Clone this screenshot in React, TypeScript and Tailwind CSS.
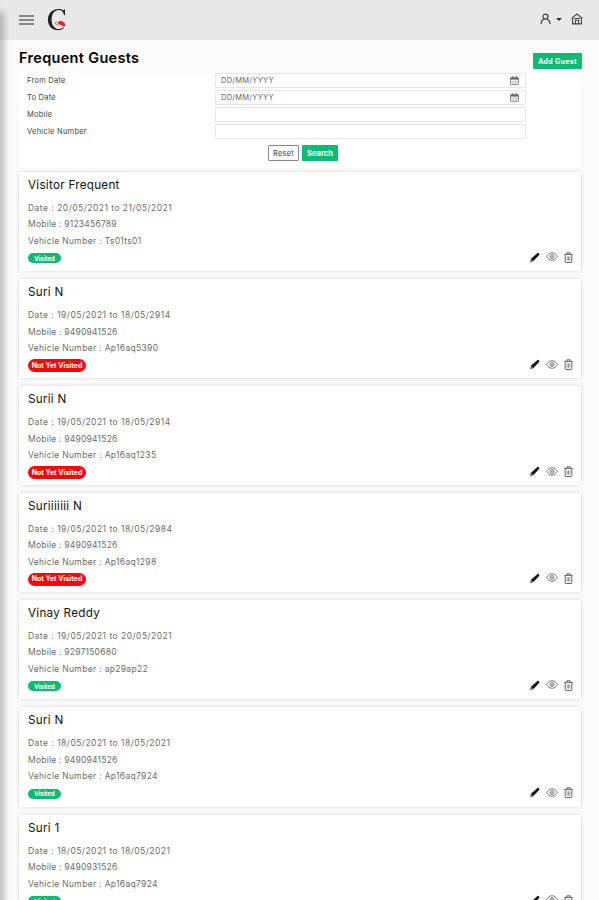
import React from 'react';
import { clsx } from 'clsx';

interface Guest {
  id: number;
  name: string;
  from: string;
  to: string;
  mobile: string;
  vehicle: string;
  visited: boolean;
}

const guests: Guest[] = [
  { id: 1, name: 'Visitor Frequent', from: '20/05/2021', to: '21/05/2021', mobile: '9123456789', vehicle: 'Ts01ts01', visited: true },
  { id: 2, name: 'Suri N', from: '19/05/2021', to: '18/05/2914', mobile: '9490941526', vehicle: 'Ap16aq5390', visited: false },
  { id: 3, name: 'Surii N', from: '19/05/2021', to: '18/05/2914', mobile: '9490941526', vehicle: 'Ap16aq1235', visited: false },
  { id: 4, name: 'Suriiiiiii N', from: '19/05/2021', to: '18/05/2984', mobile: '9490941526', vehicle: 'Ap16aq1298', visited: false },
  { id: 5, name: 'Vinay Reddy', from: '19/05/2021', to: '20/05/2021', mobile: '9297150680', vehicle: 'ap29ap22', visited: true },
  { id: 6, name: 'Suri N', from: '18/05/2021', to: '18/05/2021', mobile: '9490941526', vehicle: 'Ap16aq7924', visited: true },
  { id: 7, name: 'Suri 1', from: '18/05/2021', to: '18/05/2021', mobile: '9490931526', vehicle: 'Ap16aq7924', visited: true },
];

const Logo: React.FC = () => (
  <svg width="20" height="24" viewBox="0 0 20 24" className="-mt-px ml-[13px]">
    <path
      d="M18 1.600v5.600h-.8C16.300 3.800 14.600 2 11.800 2 7.600 2 4.600 5.800 4.600 11.400s3 9.700 7.200 9.700c1.900 0 3.300-.6 4.700-1.800l.6.5c-1.600 1.700-3.500 2.500-6.100 2.500C5 22.300.9 18.100.9 11.800S5.300 1 11.500 1c1.900 0 3.700.5 4.900 1.400l.7-.8z"
      fill="#222"
    />
    <path d="M11 14.300l2.400-1.500 1.900.6 2.400 1.700.5 2.800-2.200.6-2.300-1.700-2.600-.6z" fill="#ee1c28" />
    <path d="M7.800 15.200l1.900-1.400 1.800 1.500-1.500 1.500z" fill="none" stroke="#ee5b62" strokeWidth=".9" />
  </svg>
);

const UserIcon: React.FC = () => (
  <svg width="11" height="12" viewBox="0 0 11 12" fill="none" stroke="#444" strokeWidth="1.200">
    <circle cx="5.500" cy="3.600" r="2.500" />
    <path d="M4.300 6C2.200 6.800 1.100 8.600 1 11M6.700 6c2.100.8 3.200 2.600 3.300 5" />
  </svg>
);

const HomeIcon: React.FC = () => (
  <svg width="12" height="12" viewBox="0 0 12 12" fill="none" stroke="#444" strokeWidth="1.100">
    <path d="M.6 5.400L6 1l5.400 4.400M1.600 4.900v6h8.800v-6" />
    <path d="M4.400 10.900V7.200h3.200v3.700M3 5.500h6" />
  </svg>
);

const CalendarIcon: React.FC = () => (
  <svg width="9" height="9" viewBox="0 0 9 9" fill="none" stroke="#666" strokeWidth=".8">
    <rect x=".6" y="1.400" width="7.800" height="7" rx=".6" />
    <path d="M.6 2.700h7.800" strokeWidth="1.800" />
    <path d="M2.600 0v2M6.400 0v2" />
    <path d="M.6 5.900h7.800M3.200 4v4.400M5.800 4v4.400" stroke="#999" strokeWidth=".5" />
  </svg>
);

const PencilIcon: React.FC = () => (
  <svg width="11" height="11" viewBox="0 0 11 11">
    <path d="M8.200 1.200c.5-.5 1-.5 1.500 0l.4.400c.5.5.5 1 0 1.500L4.200 9.300 1.700 7.100z" fill="#151515" />
    <path d="M1.700 7.100l2.500 2.200-3.200 1.200z" fill="#666" />
  </svg>
);

const EyeIcon: React.FC = () => (
  <svg width="12" height="10" viewBox="0 0 12 10" fill="none" stroke="#666" strokeWidth=".9">
    <path d="M.6 4.500C2 2 3.800.7 6 .7S10 2 11.400 4.500C10 7 8.200 8.300 6 8.300S2 7 .6 4.500z" />
    <circle cx="6" cy="4.500" r="2" />
    <circle cx="6" cy="4.500" r=".5" />
  </svg>
);

const TrashIcon: React.FC = () => (
  <svg width="9" height="11" viewBox="0 0 9 11" fill="none" stroke="#555" strokeWidth=".9">
    <path d="M.3 2.400h8.400M2.800 2.300V.8h3.400v1.500M1.200 2.600v7.200c0 .4.300.7.700.7h5.200c.4 0 .7-.3.7-.7V2.600" />
    <path d="M3.200 4.300v4.400M5.800 4.300v4.400M4.500 4.300v4.400" strokeWidth=".6" />
  </svg>
);

const Field: React.FC<{ label: string; date?: boolean }> = ({ label, date }) => (
  <div className="flex h-[17px] items-start">
    <label className="w-[188px] pt-px text-[7.5px] leading-[14px] tracking-[0.25px] text-[#444]">{label}</label>
    <div className="flex h-[15px] w-[311px] items-center justify-between rounded-[1px] border border-[#e3e6e8] bg-white pr-[6px] pl-[5px]">
      {date && (
        <>
          <span className="pt-px text-[7.5px] leading-none tracking-[0.3px] text-[#666]">DD/MM/YYYY</span>
          <CalendarIcon />
        </>
      )}
    </div>
  </div>
);

const GuestCard: React.FC<{ guest: Guest }> = ({ guest }) => (
  <div
    className={clsx(
      'w-[562px] bg-white pl-[9px] shadow-[0_0_3px_rgba(0,0,0,0.16)]',
      guest.visited ? 'h-[99.500px]' : 'h-[98.800px]'
    )}
  >
    <h2 className="pt-[5px] text-[11.7px] leading-[17px] tracking-[0.26px] text-[#111]">{guest.name}</h2>
    <div className="pt-[6px] text-[8.5px] leading-[16.500px] text-[#6c6c6c]">
      <p className="tracking-[0.48px]">Date : {guest.from} to {guest.to}</p>
      <p className="tracking-[0.22px]">Mobile : {guest.mobile}</p>
      <p className="tracking-[0.32px]">Vehicle Number : {guest.vehicle}</p>
    </div>
    <div className="flex h-[18px] items-center justify-between pr-[8px]">
      {guest.visited ? (
        <span className="flex h-[10px] w-[33px] items-center justify-center rounded-full bg-[#0cbc76] text-[6px] leading-[9px] font-bold text-white">
          Visited
        </span>
      ) : (
        <span className="flex h-[13px] w-[58px] items-center justify-center rounded-full bg-[#fb0508] text-[7px] leading-[10px] font-bold text-white">
          Not Yet Visited
        </span>
      )}
      <div className="mb-[2px] flex items-center gap-[6px]">
        <PencilIcon />
        <EyeIcon />
        <TrashIcon />
      </div>
    </div>
  </div>
);

export default function App() {
  return (
    <div className="relative h-[900px] w-[599px] overflow-hidden bg-[#fafafa] font-['Inter','Liberation_Sans',sans-serif]">
      <div className="absolute top-[6px] bottom-0 left-0 w-[9px] bg-linear-to-r from-black/22 to-transparent mask-[linear-gradient(to_bottom,transparent,black_12px)]" />

      <header className="flex h-[40px] items-center bg-[#e8e8e8] pl-[19px]">
        <div className="flex w-[15px] flex-col gap-[2px]">
          <span className="h-[2px] bg-[#888]" />
          <span className="h-[2px] bg-[#888]" />
          <span className="h-[2px] bg-[#888]" />
        </div>
        <Logo />
        <div className="-mt-[3px] ml-auto flex items-center pr-[16px]">
          <UserIcon />
          <span className="mt-[2px] mr-[9px] ml-[5px] border-x-[3px] border-t-[3px] border-x-transparent border-t-[#333]" />
          <HomeIcon />
        </div>
      </header>

      <main className="pl-[19px]">
        <div className="flex h-[33px] w-[563px] justify-between">
          <h1 className="pt-[8px] text-[14.5px] leading-[20px] font-semibold tracking-[0.32px] text-black">Frequent Guests</h1>
          <button className="mt-[13px] h-[16px] w-[49px] rounded-[1px] bg-[#0cbc76] text-[7px] leading-[17px] font-bold tracking-[0.3px] text-white">
            Add Guest
          </button>
        </div>

        <form className="h-[95px] w-[562px] bg-white pl-[8px]">
          <Field label="From Date" date />
          <Field label="To Date" date />
          <Field label="Mobile" />
          <Field label="Vehicle Number" />
          <div className="flex gap-[3px] pt-[4px] pl-[241px]">
            <button type="button" className="h-[16px] w-[31px] rounded-[1px] border border-[#888] text-[7.5px] leading-[15px] tracking-[0.2px] text-[#444]">
              Reset
            </button>
            <button type="button" className="h-[16px] w-[36px] rounded-[1px] bg-[#0cbc76] text-[7.5px] leading-[17px] font-bold text-white">
              Search
            </button>
          </div>
        </form>

        <div className="flex flex-col gap-[8px] pt-[3.800px]">
          {guests.map((guest) => (
            <GuestCard key={guest.id} guest={guest} />
          ))}
        </div>
      </main>
    </div>
  );
}
